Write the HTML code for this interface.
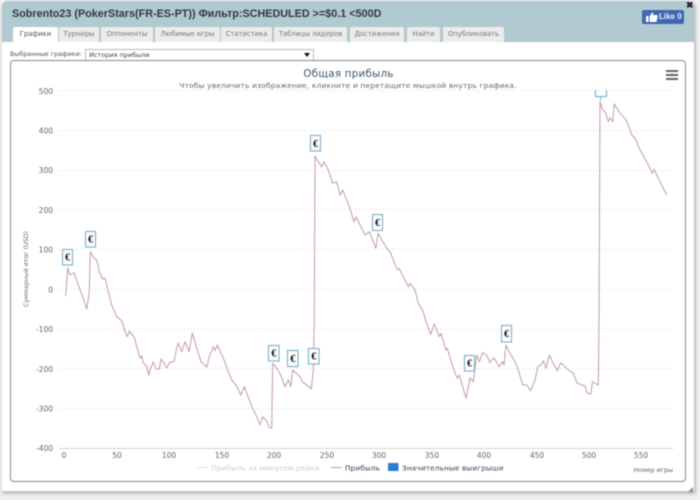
<!DOCTYPE html>
<html><head><meta charset="utf-8"><style>
html,body{margin:0;padding:0;width:700px;height:500px;overflow:hidden;background:#f1f1f1}
#w{position:relative;width:700px;height:500px;filter:blur(.4px);font-family:"DejaVu Sans",sans-serif}
#win{position:absolute;left:2px;top:1px;width:692px;height:490px;background:#fff;border-radius:5px 5px 0 0;box-shadow:1px 2px 3px 1px #bbb;overflow:hidden}
#head{position:absolute;left:0;top:0;right:0;height:41px;background:#b1c9d1}
#t{position:absolute;left:10px;top:7px;font:bold 10.800px "Liberation Sans",sans-serif;color:#2e3a40;white-space:nowrap}
.tab{position:absolute;top:26px;height:15px;background:#ececec;color:#777;font-size:6.800px;line-height:15px;text-align:center;border-radius:2px 2px 0 0;white-space:nowrap}
.tab.a{background:#fff;color:#555}
#lab{position:absolute;left:8px;top:49px;font-size:6.400px;color:#555;white-space:nowrap}
#sel{position:absolute;left:83px;top:48px;width:227px;height:10px;border:1px solid #bbb;font-size:6.500px;line-height:10px;color:#444;text-indent:3px}
#sel i{position:absolute;right:3px;top:3px;width:0;height:0;border:3px solid transparent;border-top:4px solid #111;border-bottom:0}
#fb{position:absolute;left:642px;top:10px;width:42px;height:14px;background:#4267b2;border-radius:2px;color:#e8edf6;font:bold 8px/14px "Liberation Sans",sans-serif;white-space:nowrap}
#fb span{position:absolute;left:17px;top:0}
#fb svg{position:absolute;left:4px;top:2px}
#x{position:absolute;left:686px;top:0;font:bold 9px/10px "Liberation Sans",sans-serif;color:#222}
#panel{position:absolute;left:10px;top:60px;width:674px;height:420px;border:1px solid #888;border-radius:4px;background:#fff}
svg#c{position:absolute;left:0;top:0}
.y{font-size:7.500px;fill:#666;text-anchor:end}
.xl{font-size:7.500px;fill:#666;text-anchor:middle}
.g{stroke:#ddd;stroke-width:1;stroke-dasharray:1 2}
.m{fill:#fff;stroke:#86b3d0;stroke-width:1.200}
.e{font:bold 10px "Liberation Serif",serif;fill:#000;text-anchor:middle}
</style></head><body><div id="w">
<div id="win">
<div id="head"></div>
<div id="t">Sobrento23 (PokerStars(FR-ES-PT)) Фильтр:SCHEDULED &gt;=$0.1 &lt;500D</div>
<div class="tab a" style="left:11px;width:45px">Графики</div>
<div class="tab" style="left:57px;width:40px">Турниры</div>
<div class="tab" style="left:99px;width:52px">Оппоненты</div>
<div class="tab" style="left:153px;width:65px">Любимые игры</div>
<div class="tab" style="left:219px;width:51px">Статистика</div>
<div class="tab" style="left:272px;width:73px">Таблицы лидеров</div>
<div class="tab" style="left:348px;width:54px">Достижения</div>
<div class="tab" style="left:405px;width:33px">Найти</div>
<div class="tab" style="left:441px;width:61px">Опубликовать</div>
<div id="lab">Выбранные графики:</div>
<div id="sel">История прибыли<i></i></div>
</div>
<div id="fb"><svg width="12" height="10" viewBox="0 0 12 10"><path d="M0 4h2.500v6H0zM3.500 4.500 6 .5c1 0 1.500.8 1 2.500h4c1 0 1 1.500.5 2l-.8 4c-.2.7-.7 1-1.200 1H3.500z" fill="#fff"/></svg><span>Like 0</span></div>
<div id="x">✖</div>
<div id="panel"></div>
<svg id="c" width="700" height="500" viewBox="0 0 700 500" style="font-family:'DejaVu Sans',sans-serif">
<g class="g">
<line x1="59" x2="672" y1="90.500" y2="90.500"/><line x1="59" x2="672" y1="130.500" y2="130.500"/><line x1="59" x2="672" y1="170.500" y2="170.500"/><line x1="59" x2="672" y1="209.500" y2="209.500"/><line x1="59" x2="672" y1="249.500" y2="249.500"/><line x1="59" x2="672" y1="289.500" y2="289.500"/><line x1="59" x2="672" y1="329.500" y2="329.500"/><line x1="59" x2="672" y1="368.500" y2="368.500"/><line x1="59" x2="672" y1="408.500" y2="408.500"/>
</g>
<line x1="59" x2="673" y1="448.500" y2="448.500" stroke="#d4d4d4"/>
<g class="y">
<text x="53" y="94">500</text><text x="53" y="133.500">400</text><text x="53" y="173">300</text><text x="53" y="213">200</text><text x="53" y="252.500">100</text><text x="53" y="292.500">0</text><text x="53" y="332">-100</text><text x="53" y="372">-200</text><text x="53" y="411.500">-300</text><text x="53" y="451">-400</text>
</g>
<g class="xl">
<text x="64" y="458">0</text><text x="117" y="458">50</text><text x="169" y="458">100</text><text x="222" y="458">150</text><text x="274" y="458">200</text><text x="327" y="458">250</text><text x="379" y="458">300</text><text x="432" y="458">350</text><text x="484" y="458">400</text><text x="537" y="458">450</text><text x="589" y="458">500</text><text x="641" y="458">550</text>
</g>
<text transform="translate(28,269) rotate(-90)" text-anchor="middle" font-size="6.300" fill="#666">Суммарный итог (USD)</text>
<text x="348.500" y="77" text-anchor="middle" font-size="10.300" letter-spacing=".25" fill="#3e576f">Общая прибыль</text>
<text x="348" y="88" text-anchor="middle" font-size="7.400" letter-spacing=".2" fill="#666">Чтобы увеличить изображение, кликните и перетащите мышкой внутрь графика.</text>
<path d="M666 71h12M666 75h12M666 79h12" stroke="#666" stroke-width="2" fill="none"/>
<text x="673" y="472" text-anchor="end" font-size="6.300" fill="#666">Номер игры</text>
<line x1="197" x2="207" y1="467.500" y2="467.500" stroke="#ddd"/>
<text x="211" y="470.500" font-size="7.300" letter-spacing=".12" fill="#ccc">Прибыль за минусом рейка</text>
<line x1="331" x2="342" y1="467.500" y2="467.500" stroke="#c39ca2"/>
<text x="345" y="470.500" font-size="7.300" letter-spacing=".12" fill="#333d55">Прибыль</text>
<rect x="388" y="463" width="10.500" height="8" fill="#3079d0"/>
<text x="402" y="470.500" font-size="7.300" letter-spacing=".15" fill="#333d55">Значительные выигрыши</text>
<path fill="none" stroke="#c39ca2" stroke-width="1" stroke-linejoin="round" d="M65.700 296L67.700 268L70 275L74 272.700L76.700 280L80 290L83.300 298L86.700 309L89.300 291.700L90.300 251.700L94 258L96.700 260L99.300 271.700L102.700 279L105 278L108.300 291.700L111.700 305L116.700 316.700L121.700 320.700L125 331.700L127.300 336.700L129.300 331L134 336.700L140 358L141.700 356L143.300 363L146.700 366L148.700 375L150.700 368L153.300 362L156 369L159.300 369L161 359L164 363L166.700 368L170 362L174 361.700L176.700 348L178.300 343L181.700 351.700L185 341.700L189 351.700L192.300 333L196.700 348L201 361.700L206.700 367L209.300 356.700L213.300 346.700L215 350.700L217.300 345L223.300 358L228.300 371.700L231.700 380L236.700 386L240.700 395L244.300 386.700L250 401.700L251.700 406.700L256.700 416.700L260 425L262.700 416.700L266.700 421L269.300 427.300L271.700 428.300L272.700 363.300L276.700 368.300L280.700 375L285 386.700L288.300 380L290.700 386.700L292.700 370L296 373L300 376.700L302.300 381.700L306.700 385L311.300 389L313.300 370L314.300 320L315 156L318.300 161.700L321.700 167L324 161.700L328.300 170L332.700 183.300L336.700 181.700L340 195L342.700 190L349.300 206.700L354 221.700L356 216.700L365 235L369.300 231.700L376 248.300L378 233.300L381.700 240L385 245L386.700 248.300L390 251.700L397.300 270L399 268.300L408.300 286.700L410 283.300L415 290L418.300 303.300L423.300 311.700L426 321.700L430.700 334.300L434.300 324L439.300 336.700L441 333.300L446 350L447.300 348.300L453.300 368.300L457.300 378.300L459.300 375L466 398.300L470 378L473.300 381.700L476.700 355L479.300 361.700L482.700 352.700L486.700 355L490 362.700L491.700 360L494 358L499.300 366.700L502.700 361.700L504 365L506 345L510 353.300L515 361.700L518.300 370L522.700 385L526.700 385L530.700 390.700L535 380L537.700 366.700L540.700 365L543.300 360.700L546 368.300L549.300 355L553.300 363.300L557.300 370.700L560.700 362.700L568.300 370L573.300 373.300L577.300 383.300L585 386L587.300 393.300L590.700 394L592.700 381.700L598.300 385L599 320L600 101.700L602.700 110L605 111.700L608.300 121.700L610 117.700L612.700 121.700L614.300 104L620 113.300L625 118.300L628.300 125L631.700 135L635 138L640 150L646.700 161.700L652.300 173.300L654 169.300L660 181.700L666.700 195"/>
<g>
<rect class="m" x="62.500" y="249.500" width="10" height="15.500"/><text class="e" x="67.500" y="260.500">€</text>
<rect class="m" x="85.500" y="231.500" width="10" height="15.500"/><text class="e" x="90.500" y="242.500">€</text>
<rect class="m" x="268.500" y="345.500" width="10.500" height="15.500"/><text class="e" x="273.700" y="356.500">€</text>
<rect class="m" x="287.500" y="350.500" width="10.500" height="16"/><text class="e" x="292.700" y="362">€</text>
<rect class="m" x="308.500" y="348.500" width="10.500" height="15.500"/><text class="e" x="313.700" y="359.500">€</text>
<rect class="m" x="310.500" y="135.500" width="10" height="15.500"/><text class="e" x="315.500" y="147">€</text>
<rect class="m" x="372.500" y="214.500" width="10" height="16"/><text class="e" x="377.500" y="226">€</text>
<rect class="m" x="464.500" y="355.500" width="10" height="15.500"/><text class="e" x="469.500" y="366.500">€</text>
<rect class="m" x="501.500" y="325.500" width="10" height="16.500"/><text class="e" x="506.500" y="337">€</text>
<path d="M595.500 90v6.500h11V90M600.500 96.500v4" class="m" style="fill:none"/>
</g>
<path d="M693 487l-5 5h5z" fill="#888"/>
</svg>
</div></body></html>
